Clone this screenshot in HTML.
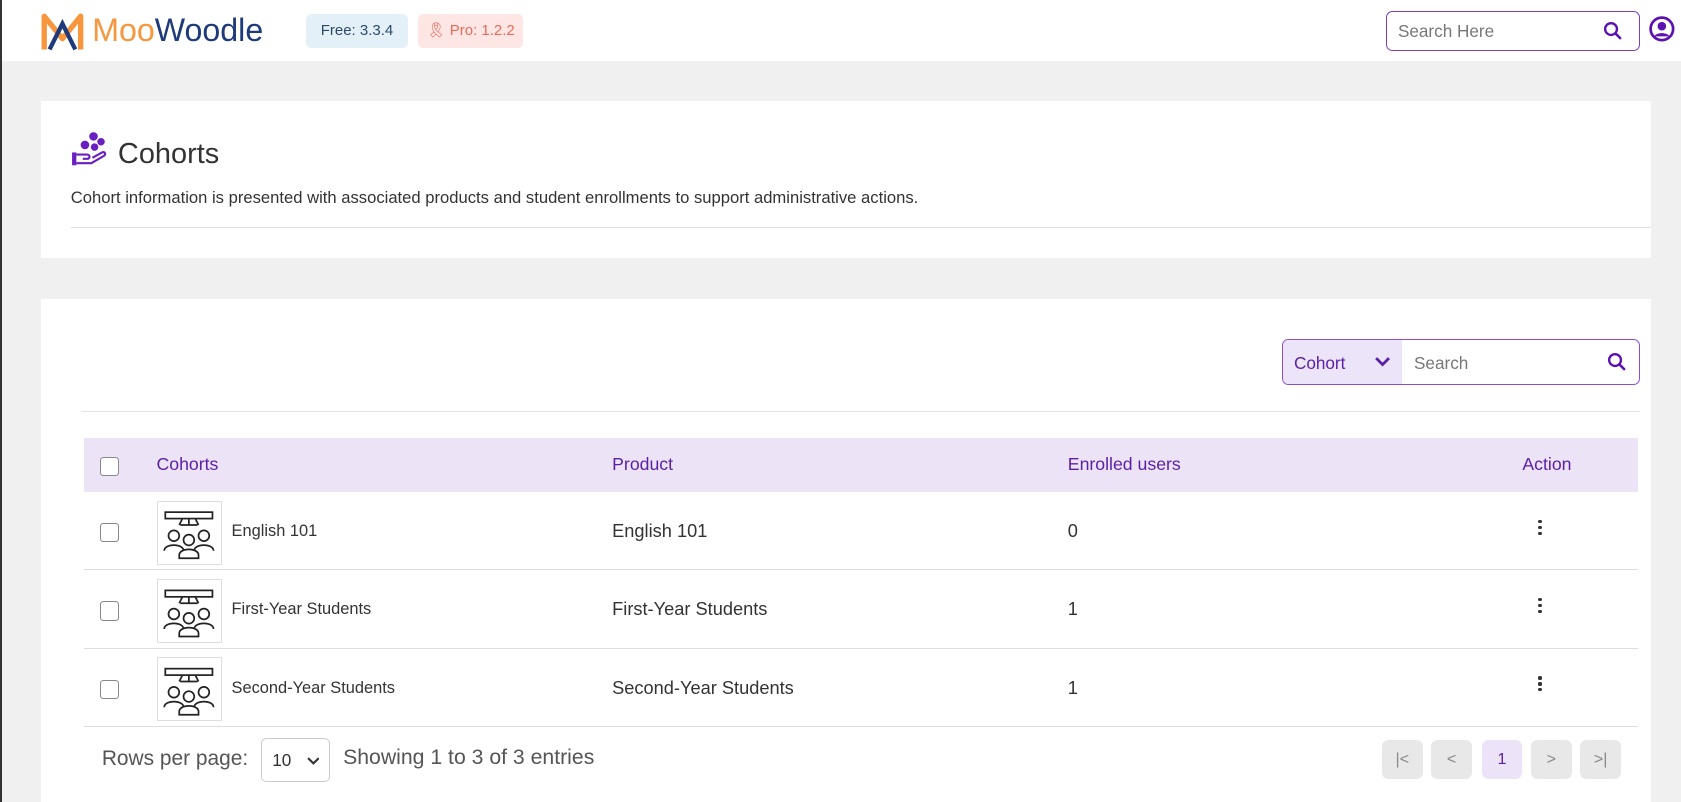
<!DOCTYPE html>
<html><head><meta charset="utf-8"><style>
*{box-sizing:border-box;margin:0;padding:0}
html,body{width:1681px;height:802px;overflow:hidden}
body{background:#f0f0f0;font-family:"Liberation Sans",sans-serif;color:#333}
#w{zoom:1.0721;width:1568px;height:748px;position:relative}
.a{position:absolute}
.top{left:0;top:0;width:1568px;height:57px;background:#fff}
.badge{top:13px;height:32px;border-radius:5px;font-size:14px;line-height:32px;text-align:center}
.card{background:#fff;left:38px;width:1502px}
.th{position:absolute;top:0;line-height:50px;font-size:16.5px;color:#5a1fa8}
.cb{position:absolute;width:18px;height:18px;border:1.5px solid #888;border-radius:3px;background:#fff}
.row{position:absolute;left:40px;width:1450px;height:73px;border-bottom:1px solid #ddd}
.img{position:absolute;left:68px;top:8px;width:61px;height:60px;border:1px solid #ddd}
.nm{position:absolute;left:138px;top:28px;font-size:15.3px}
.pr{position:absolute;left:493px;top:27px;font-size:17px}
.en{position:absolute;left:918px;top:27px;font-size:17px}
.kb{position:absolute;left:1357px;top:26px;width:4px}
.kb i{display:block;width:3px;height:3px;border-radius:50%;background:#333;margin-bottom:2.5px}
.pb{position:absolute;top:690px;width:38px;height:37px;border-radius:6px;background:#e8e8e8;color:#888;text-align:center;line-height:37px;font-size:15px}
</style></head><body><div id="w">
<div class="a top"></div>
<div class="a" style="left:0;top:0;width:2px;height:748px;background:#333"></div>
<svg class="a" style="left:38px;top:12px" width="40" height="36" viewBox="0 0 40 36"><path d="M3 34V3L20 24L37 3V34" fill="none" stroke="#f7963d" stroke-width="5" stroke-linejoin="round"/><path d="M8 34L20 10L32 34" fill="none" stroke="#1e3a7b" stroke-width="4"/></svg>
<div class="a" style="left:86px;top:11px;font-size:30px"><span style="color:#f7963d">Moo</span><span style="color:#1e3a7b">Woodle</span></div>
<div class="a badge" style="left:285px;width:96px;background:#e3f0f7;color:#2b4a6b">Free: 3.3.4</div>
<div class="a badge" style="left:390px;width:98px;background:#fde6e3;color:#e76a5a">&#x1F397;&#xFE0E; Pro: 1.2.2</div>
<div class="a" style="left:1293px;top:10px;width:237px;height:38px;border:1.5px solid #7b3fc4;border-radius:6px;background:#fff"><span style="position:absolute;left:10px;top:9px;font-size:16px;color:#777">Search Here</span>
<svg style="position:absolute;right:16px;top:9px" width="18" height="18" viewBox="0 0 18 18"><circle cx="7.5" cy="7.5" r="5.5" fill="none" stroke="#5b12b0" stroke-width="2.2"/><path d="M11.5 11.5L16 16" stroke="#5b12b0" stroke-width="2.4" stroke-linecap="round"/></svg></div>
<svg class="a" style="left:1538px;top:15px" width="24" height="24" viewBox="0 0 24 24"><circle cx="12" cy="12" r="10.5" fill="none" stroke="#5b12b0" stroke-width="2.5"/><circle cx="12" cy="9.5" r="4" fill="#5b12b0"/><path d="M5 19c2-4 12-4 14 0" fill="#5b12b0"/></svg>

<div class="a card" style="top:94px;height:147px"></div>
<svg class="a" style="left:66px;top:122px" width="34" height="34" viewBox="0 0 34 34"><rect x="1" y="20" width="4" height="12" fill="#6a1fc0"/><path d="M5 22h10c3 0 3 4 0 4h-4M5 30h14l12-7c2-2 0-4-2-3l-9 5" fill="none" stroke="#6a1fc0" stroke-width="2"/><circle cx="13" cy="13" r="4" fill="#6a1fc0"/><circle cx="21" cy="5" r="4" fill="#6a1fc0"/><circle cx="28" cy="10" r="3.5" fill="#6a1fc0"/><circle cx="22" cy="15" r="3.5" fill="#6a1fc0"/></svg>
<div class="a" style="left:110px;top:129px;font-size:27px;color:#333">Cohorts</div>
<div class="a" style="left:66px;top:175px;font-size:15.5px;color:#333">Cohort information is presented with associated products and student enrollments to support administrative actions.</div>
<div class="a" style="left:66px;top:212px;width:1474px;height:1px;background:#ddd"></div>

<div class="a card" style="top:279px;height:480px"></div>
<div class="a" style="left:1196px;top:316px;width:334px;height:43px;border:1.5px solid #8a4fd0;border-radius:6px;background:#fff;overflow:hidden">
<div style="position:absolute;left:0;top:0;width:111px;height:100%;background:#ece4f8"></div>
<span style="position:absolute;left:10px;top:12px;font-size:16px;color:#5a1fa8">Cohort</span>
<svg style="position:absolute;left:85px;top:15px" width="16" height="11" viewBox="0 0 16 11"><path d="M2 2l6 6 6-6" fill="none" stroke="#5a1fa8" stroke-width="2.6"/></svg>
<span style="position:absolute;left:122px;top:12px;font-size:16px;color:#777">Search</span>
<svg style="position:absolute;right:12px;top:11px" width="18" height="18" viewBox="0 0 18 18"><circle cx="7.5" cy="7.5" r="5.5" fill="none" stroke="#5b12b0" stroke-width="2.2"/><path d="M11.5 11.5L16 16" stroke="#5b12b0" stroke-width="2.4" stroke-linecap="round"/></svg></div>
<div class="a" style="left:76px;top:383px;width:1454px;height:1px;background:#e2e6ea"></div>

<div class="a" style="left:78px;top:409px;width:1450px;height:50px;background:#ece3f6">
<div class="cb" style="left:15px;top:17px"></div>
<div class="th" style="left:68px">Cohorts</div><div class="th" style="left:493px">Product</div><div class="th" style="left:918px">Enrolled users</div><div class="th" style="left:1342px">Action</div></div>

<div class="a" style="left:38px;top:459px">
<div class="row" style="top:0"><div class="cb" style="left:15px;top:29px"></div><div class="img"></div><div class="nm">English 101</div><div class="pr">English 101</div><div class="en">0</div><div class="kb"><i></i><i></i><i></i></div></div>
<div class="row" style="top:73px"><div class="cb" style="left:15px;top:29px"></div><div class="img"></div><div class="nm">First-Year Students</div><div class="pr">First-Year Students</div><div class="en">1</div><div class="kb"><i></i><i></i><i></i></div></div>
<div class="row" style="top:146px"><div class="cb" style="left:15px;top:29px"></div><div class="img"></div><div class="nm">Second-Year Students</div><div class="pr">Second-Year Students</div><div class="en">1</div><div class="kb"><i></i><i></i><i></i></div></div>
</div>
<svg class="a" style="left:150px;top:476px" width="54" height="200" viewBox="0 0 54 200">
<defs><g id="p" fill="none" stroke="#222" stroke-width="1.6"><rect x="4" y="0" width="44" height="6"/><path d="M20 6l-3 6M26 6v6M32 6l3 6M18 12h16"/><circle cx="12" cy="22" r="5"/><circle cx="40" cy="22" r="5"/><circle cx="26" cy="26" r="5"/><path d="M3 36c0-7 18-7 18 0M31 36c0-7 18-7 18 0M17 40c0-7 18-7 18 0v3H17z"/></g></defs>
<use href="#p" y="2"/><use href="#p" y="75"/><use href="#p" y="148"/></svg>

<div class="a" style="left:95px;top:697px;font-size:19.5px;color:#555">Rows per page:</div>
<div class="a" style="left:243px;top:688px;width:65px;height:41px;border:1px solid #ccc;border-radius:5px;background:#fff"><span style="position:absolute;left:10px;top:11px;font-size:16px">10</span><svg style="position:absolute;left:42px;top:17px" width="12" height="8" viewBox="0 0 12 8"><path d="M1 1l5 5 5-5" fill="none" stroke="#333" stroke-width="2"/></svg></div>
<div class="a" style="left:320px;top:696px;font-size:19.8px;color:#555">Showing 1 to 3 of 3 entries</div>
<div class="pb" style="left:1289px">|&lt;</div><div class="pb" style="left:1335px">&lt;</div><div class="pb" style="left:1382px;background:#ece3f8;color:#5a1fa8">1</div><div class="pb" style="left:1428px">&gt;</div><div class="pb" style="left:1474px">&gt;|</div>
</div></body></html>
